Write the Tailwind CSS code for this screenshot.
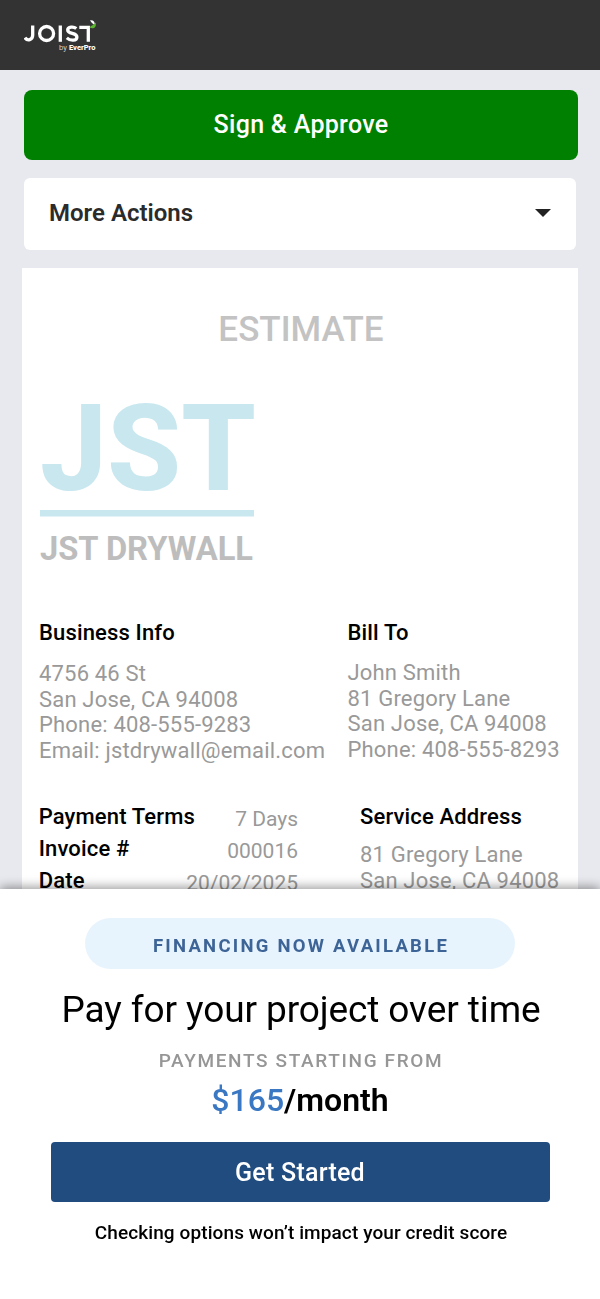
<!doctype html>
<html lang="en">
<head>
  <meta charset="UTF-8" />
  <meta name="viewport" content="width=device-width, initial-scale=1.0" />
  <title>Estimate</title>
  <script src="https://cdn.jsdelivr.net/npm/@tailwindcss/browser@4"></script>
</head>
<body class="h-[1299px] overflow-hidden bg-[#e8e9ee] font-[Roboto,sans-serif] text-black">

<header class="h-[70px] bg-[#333333] px-6 pt-[18px]">
  <svg class="h-9 w-20" viewBox="0 0 80 36" role="img" aria-label="Joist by EverPro">
    <g fill="none" stroke="#fff" stroke-width="3.300">
      <path d="M8.700 7.500v9.600c0 5-5.300 6.200-7.700 2.600" />
      <circle cx="22.600" cy="15.500" r="7" />
      <path d="M36.300 7.500v16.300" />
      <path d="M52.300 10.500c-2.600-2.200-8.600-1.900-8.600 1.500 0 4.600 9.200 2.300 9.200 6.900 0 4.200-6.600 4.200-10.100 1" />
      <path d="M55.300 9.300h9v14.500" />
    </g>
    <path d="M66 2.300c3.300-.4 5 1 4.700 4.700-1.500-.8-3.300-1.900-4.700-4.700z" fill="#fff" />
    <path d="M71.800 4.500c.7 5-2 6.900-6.200 5 1.400-2.300 4-2 6.200-5z" fill="#5cb531" />
    <text x="35" y="32" font-size="6.500" fill="#ccc" textLength="8" lengthAdjust="spacingAndGlyphs">by</text>
    <text x="45" y="32" font-size="6.500" font-weight="800" fill="#fff" textLength="26.500" lengthAdjust="spacingAndGlyphs">EverPro</text>
  </svg>
</header>

<main class="px-[22px] pt-5">
  <button class="ml-0.5 block h-[70px] w-[554px] rounded-lg bg-[#008000] text-center text-[25px] font-medium tracking-[0.3px] text-white">Sign &amp; Approve</button>

  <button class="mt-[18px] ml-0.5 flex h-[72px] w-[552px] items-center justify-between rounded-md bg-white pr-[25px] pb-0.5 pl-[25px] text-2xl font-semibold text-[#2b2b2b]">
    <span>More Actions</span>
    <svg class="h-2 w-4" viewBox="0 0 16 8"><path d="M0 0h16L8 8z" fill="#222" /></svg>
  </button>

  <article class="mt-[18px] h-[760px] bg-white px-4">
    <h1 class="pt-[42px] pl-0.5 text-center text-[35px]/[40px] font-medium text-[#c3c3c3]">ESTIMATE</h1>

    <svg class="mt-[46px] ml-0.5 block h-[170px] w-[216px] overflow-visible" viewBox="0 0 216 170" role="img" aria-label="JST Drywall">
      <text x="0" y="94" font-size="120" font-weight="800" fill="#c8e7ef" textLength="216" lengthAdjust="spacingAndGlyphs">JST</text>
      <rect x="0" y="114" width="214" height="6.500" fill="#c8e7ef" />
      <text x="0" y="163.500" font-size="33" font-weight="700" fill="#bdbdbd" textLength="213" lengthAdjust="spacingAndGlyphs">JST DRYWALL</text>
    </svg>

    <div class="mt-[54px] flex">
      <section class="w-[309px] pl-px">
        <h2 class="text-[22px]/[26px] font-medium tracking-[0.15px]">Business Info</h2>
        <p class="mt-[15px] text-[22px]/[25.7px] tracking-[0.18px] text-[#999]">4756 46 St<br>San Jose, CA 94008<br>Phone: 408-555-9283<br>Email: jstdrywall@email.com</p>
      </section>
      <section class="pl-[0.5px]">
        <h2 class="text-[22px]/[26px] font-medium tracking-[0.15px]">Bill To</h2>
        <p class="mt-[14px] text-[22px]/[25.7px] tracking-[0.18px] text-[#999]">John Smith<br>81 Gregory Lane<br>San Jose, CA 94008<br>Phone: 408-555-8293</p>
      </section>
    </div>

    <div class="mt-[37px] flex">
      <dl class="w-[260px] pl-[0.7px] text-[22px]/8 font-medium tracking-[0.15px]">
        <div class="flex h-8 justify-between"><dt>Payment Terms</dt><dd class="pt-0.5 text-[21px]/8 font-normal tracking-normal text-[#999]">7 Days</dd></div>
        <div class="flex h-8 justify-between"><dt>Invoice #</dt><dd class="pt-0.5 text-[21px]/8 font-normal tracking-normal text-[#999]">000016</dd></div>
        <div class="flex h-8 justify-between"><dt>Date</dt><dd class="pt-0.5 text-[21px]/8 font-normal tracking-normal text-[#999]">20/02/2025</dd></div>
      </dl>
      <section class="ml-[62px]">
        <h2 class="text-[22px]/8 font-medium tracking-[0.15px]">Service Address</h2>
        <p class="mt-[9px] text-[22px]/[25.7px] tracking-[0.18px] text-[#999]">81 Gregory Lane<br>San Jose, CA 94008</p>
      </section>
    </div>
  </article>
</main>

<!-- Financing sheet -->
<aside class="fixed inset-x-0 bottom-0 flex h-[410px] flex-col items-center bg-white pt-[29px] shadow-[0_-2px_10px_rgba(0,0,0,0.4)]">
  <div class="h-[51px] w-[430px] rounded-full bg-[#e8f4fd] pt-[5px] pl-0.5 text-center text-[18.5px]/[47px] font-bold tracking-[2.25px] text-[#3d6496]">FINANCING NOW AVAILABLE</div>
  <h2 class="mt-[18px] pl-0.5 text-[37px]/[46px] tracking-[-0.1px]">Pay for your project over time</h2>
  <p class="mt-4 pl-0.5 text-[19px]/6 font-medium tracking-[1.65px] text-[#969696]">PAYMENTS STARTING FROM</p>
  <p class="mt-[7px] text-[32px]/10 font-medium"><span class="text-[#3b78c3]">$165</span><span class="font-semibold">/month</span></p>
  <button class="mt-[22px] h-[60px] w-[499px] rounded bg-[#204c80] pt-0.5 text-[25px] font-medium tracking-[0.25px] text-white">Get Started</button>
  <p class="mt-[19px] pl-0.5 text-[19px]/6 font-medium tracking-[0.1px]">Checking options won’t impact your credit score</p>
</aside>

</body>
</html>
